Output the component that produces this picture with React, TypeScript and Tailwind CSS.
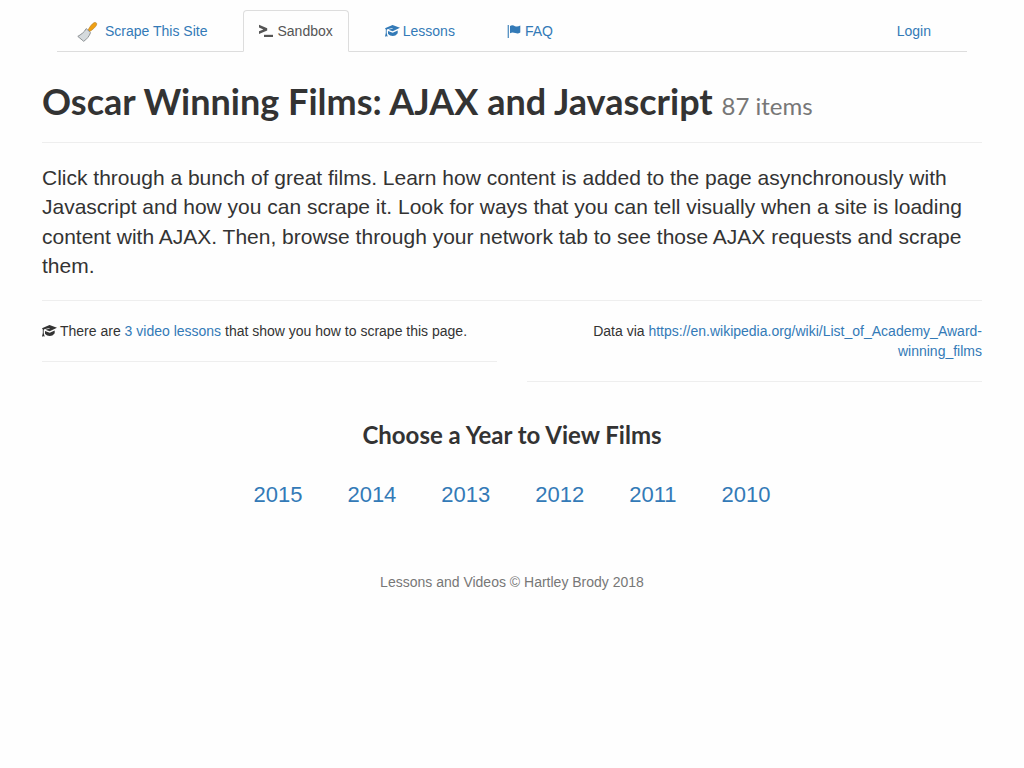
import type { ReactNode } from 'react';

const years = [2015, 2014, 2013, 2012, 2011, 2010];

const linkClass = 'text-[#337ab7] hover:underline';

function ScraperLogo() {
  return (
    <svg className="mr-2 h-5 w-5 overflow-visible" viewBox="0 0 20 20" aria-hidden="true">
      <path
        d="M11 9.4 C12 6.8 15 2.8 17.2 1.6 C18.9 .9 20.3 2.3 19.5 4 C18.5 6.3 15.4 8.9 12.6 10.6 Z"
        fill="#f0a012"
        stroke="#b98a3c"
        strokeWidth="0.7"
      />
      <path
        d="M9.2 7.6 L13.5 11.6 C12.4 15.2 9.4 18.6 6.7 20.3 L.8 15.4 C3.7 13.6 7.6 11.2 9.2 7.6 Z"
        fill="#d5dadd"
        stroke="#85898c"
        strokeWidth="0.9"
        strokeLinejoin="round"
      />
    </svg>
  );
}

function ConsoleIcon() {
  return (
    <svg className="mr-1 h-3.5 w-3.5" viewBox="0 0 14 14" fill="currentColor" aria-hidden="true">
      <path d="M0 .8 L8.2 4.2 V6.6 L0 10 V7.2 L4.4 5.4 L0 3.6 Z" />
      <path d="M5 10.8 H14 V13 H5 Z" />
    </svg>
  );
}

function EducationIcon() {
  return (
    <svg className="mr-1 inline-block h-3.5 w-3.5 overflow-visible align-[-2px]" viewBox="0 0 14 14" fill="currentColor" aria-hidden="true">
      <path d="M7.5 1 L15 3.8 L7.7 7.3 L3.4 5.7 L7.8 4.6 L7.5 4 L2.2 5.2 L1.7 6 L1.7 9.1 L2.7 12.8 L1.6 12.1 L.9 13 L.6 12.2 L0 12.5 L.8 9.1 V5.5 L0 4.3 Z" />
      <path d="M3 6.9 L7.7 8.7 L12.7 6.4 V9.3 C11 11.5 9.8 12 7.8 12 C5.8 12 4.4 11.4 3 9.8 Z" />
    </svg>
  );
}

function FlagIcon() {
  return (
    <svg className="mr-1 h-3.5 w-3.5" viewBox="0 0 14 14" fill="currentColor" aria-hidden="true">
      <path d="M.7 1 H1.8 V14 H.7 Z" />
      <path d="M3 2 C5 .7 6.5 1.5 8 2.2 C10 3 11.3 2.5 13.3 1.5 V8.5 C11.5 9.8 10 9.7 8.3 9 C6.2 8.2 4.7 8.2 3 9.3 Z" />
    </svg>
  );
}

function NavItem({ children, active = false, end = false }: { children: ReactNode; active?: boolean; end?: boolean }) {
  return (
    <li className={end ? 'ml-auto' : undefined}>
      <a
        href="#"
        aria-current={active ? 'page' : undefined}
        className={
          active
            ? 'flex h-[42px] items-center rounded-t border border-[#ddd] border-b-[#fefefe] bg-[#fefefe] px-[15px] text-[#555]'
            : 'flex h-[42px] items-center border border-transparent px-[15px] text-[#337ab7]'
        }
      >
        {children}
      </a>
    </li>
  );
}

export default function App() {
  return (
    <div className="min-h-screen bg-[#fefefe] px-[42px] pt-2.5 font-['Liberation_Sans',Arial,sans-serif] text-sm leading-5 text-[#333]">
      <div className="mx-auto max-w-[940px]">
        <nav className="mx-[15px] border-b border-[#ddd]">
          <ul className="-mb-px flex gap-5 pr-5 pl-1">
            <NavItem><ScraperLogo />Scrape This Site</NavItem>
            <NavItem active><ConsoleIcon />Sandbox</NavItem>
            <NavItem><EducationIcon />Lessons</NavItem>
            <NavItem><FlagIcon />FAQ</NavItem>
            <NavItem end>Login</NavItem>
          </ul>
        </nav>

        <main>
          <h1 className="mt-[29px] font-[Lato,sans-serif] text-4xl font-bold">
            Oscar Winning Films: AJAX and Javascript{' '}
            <small className="text-2xl font-normal text-[#777]">87 items</small>
          </h1>
          <hr className="my-5 border-[#eee]" />
          <p className="text-[21px] leading-[1.4]">
            Click through a bunch of great films. Learn how content is added to the page asynchronously with
            Javascript and how you can scrape it. Look for ways that you can tell visually when a site is loading
            content with AJAX. Then, browse through your network tab to see those AJAX requests and scrape them.
          </p>
          <hr className="mt-[19px] mb-5 border-[#eee]" />

          <div className="grid grid-cols-2 items-start gap-[30px]">
            <p className="border-b border-[#eee] pb-5">
              <EducationIcon />
              There are <a href="#" className={linkClass}>3 video lessons</a> that show you how to scrape this page.
            </p>
            <p className="border-b border-[#eee] pb-5 text-right">
              Data via{' '}
              <a href="#" className={linkClass}>https://en.wikipedia.org/wiki/List_of_Academy_Award-winning_films</a>
            </p>
          </div>

          <section className="text-center">
            <h3 className="mt-10 font-[Lato,sans-serif] text-2xl leading-[26px] font-bold">Choose a Year to View Films</h3>
            <div className="mt-[31px] flex justify-center gap-[45px] text-[22px] leading-8">
              {years.map((year) => (
                <a key={year} href="#" className={linkClass}>{year}</a>
              ))}
            </div>
          </section>
        </main>

        <footer className="mt-[61px] pb-10 text-center text-[#777]">Lessons and Videos © Hartley Brody 2018</footer>
      </div>
    </div>
  );
}
